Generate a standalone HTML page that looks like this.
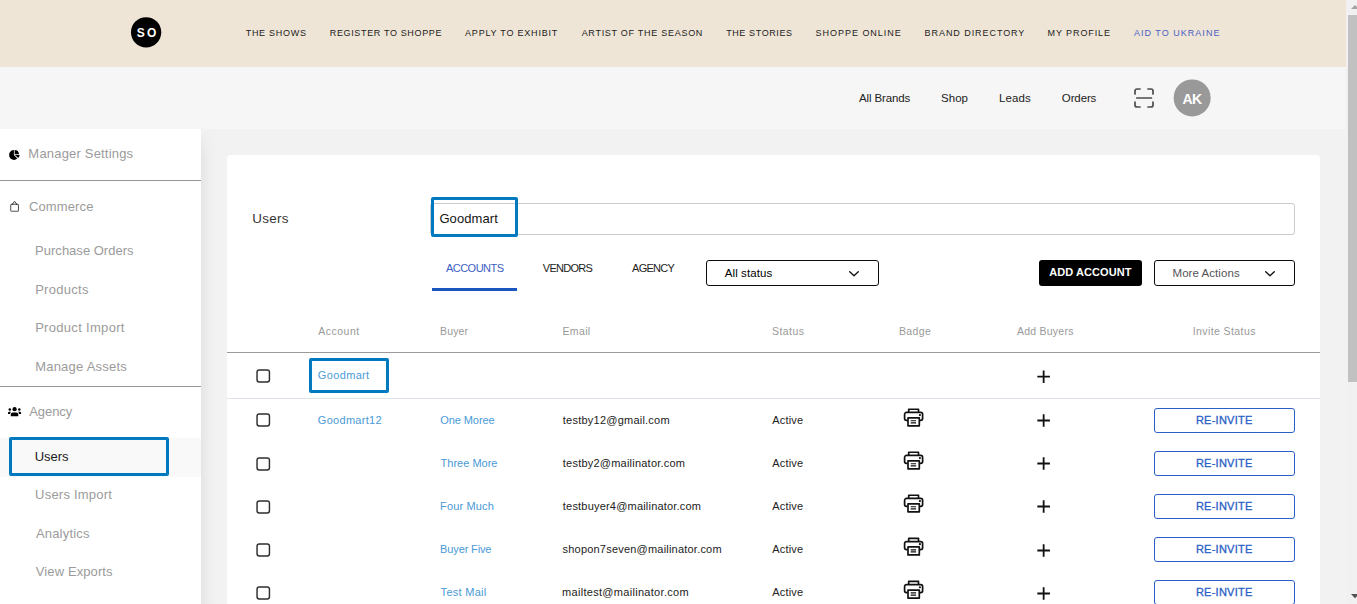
<!DOCTYPE html>
<html>
<head>
<meta charset="utf-8">
<title>Users</title>
<style>
*{box-sizing:border-box;margin:0;padding:0}
html,body{width:1357px;height:604px;overflow:hidden;background:#f1f1f1;font-family:"Liberation Sans",sans-serif;}
.abs{position:absolute}
#hdr{position:absolute;left:0;top:0;width:1346px;height:67px;background:#eee5d6}
#sub{position:absolute;left:0;top:67px;width:1346px;height:62px;background:#f6f6f6}
#main{position:absolute;left:0;top:129px;width:1346px;height:475px;background:#f2f2f2}
#shadow{position:absolute;left:201px;top:129px;width:26px;height:475px;background:linear-gradient(to right,#e5e5e5 0,#eaeaea 4px,#efefef 9px,#f2f2f2 17px)}
#side{position:absolute;left:0;top:129px;width:201px;height:475px;background:#fff}
#card{position:absolute;left:227px;top:155px;width:1093px;height:460px;background:#fff;border-radius:4px 4px 0 0}
#sbar{position:absolute;left:1346px;top:0;width:11px;height:604px;background:#f1f1f1}
#thumb{position:absolute;left:2px;top:15px;width:9px;height:367px;background:#c1c1c1}
.t{position:absolute;white-space:nowrap}
.cb{position:absolute;left:256px;width:14px;height:14px;border:1.6px solid #222;border-radius:3px;background:#fff}
.ri{position:absolute;left:1154px;width:141px;height:25px;border:1px solid #2a5fc6;border-radius:3px;background:#fff}
.hl{position:absolute;border:3px solid #0079bf;border-radius:2px}
svg{position:absolute;overflow:visible}
</style>
</head>
<body>
<div id="hdr"></div>
<div id="sub"></div>
<div id="main"></div>
<div id="shadow"></div>
<div class="abs" style="left:201px;top:129px;width:26px;height:30px;background:linear-gradient(to bottom,#f2f2f2 0,rgba(242,242,242,.6) 10px,rgba(242,242,242,0) 30px)"></div>
<div id="side"></div>
<div id="card"></div>
<div id="sbar"><div id="thumb"></div></div>
<svg style="left:1350.5px;top:4.8px" width="8" height="4" viewBox="0 0 8 4"><path d="M0 4L4 0L8 4Z" fill="#a3a3a3"/></svg>
<svg style="left:1350.5px;top:594px" width="8" height="4.2" viewBox="0 0 8 4.2"><path d="M0 0L4 4.2L8 0Z" fill="#505050"/></svg>

<!-- HEADER -->
<svg id="logo" style="left:130px;top:16px" width="33" height="33" viewBox="0 0 33 33"><circle cx="16.1" cy="16.3" r="15.15" fill="#000"/></svg>

<!-- SUBHEADER -->
<svg id="scan" style="left:1134px;top:88px" width="20" height="20" viewBox="0 0 20 20" fill="none" stroke="#4c4c4c" stroke-width="1.7" stroke-linecap="round" stroke-linejoin="round"><path d="M1 6V3a2 2 0 0 1 2-2h3M14 1h3a2 2 0 0 1 2 2v3M19 14v3a2 2 0 0 1-2 2h-3M6 19H3a2 2 0 0 1-2-2v-3M2.8 10h14.6"/></svg>
<svg id="ava" style="left:1172px;top:78px" width="40" height="40" viewBox="0 0 40 40"><circle cx="20.15" cy="19.9" r="18.5" fill="#999"/></svg>

<!-- SIDEBAR -->
<div class="abs" style="left:0;top:180px;width:201px;height:1px;background:#979797"></div>
<div class="abs" style="left:0;top:386px;width:201px;height:1px;background:#979797"></div>
<div class="abs" style="left:0;top:438px;width:201px;height:38.5px;background:#f9f9f9"></div>
<div class="hl" style="left:9px;top:437px;width:160px;height:39px"></div>
<svg id="ic-pie" style="left:9.2px;top:149.6px" width="10.8" height="10" viewBox="0 0 10.8 10"><path d="M4.9 0.1A4.9 4.9 0 1 0 8.3 8.5L4.9 5Z" fill="#000"/><path d="M5.6 0.1V4.3H10A4.5 4.5 0 0 0 5.6 0.1Z" fill="#000"/><path d="M5.9 5H10.7A4.6 4.6 0 0 1 9.3 7.9Z" fill="#000"/></svg>
<svg id="ic-bag" style="left:10px;top:200.4px" width="9.2" height="12" viewBox="0 0 9.2 12" fill="none" stroke="#555" stroke-width="1.05" stroke-linejoin="round"><rect x="0.7" y="4.3" width="7.8" height="7" rx="1.1"/><path d="M2.4 4.3L4.55 1.3L6.7 4.3" stroke="#333" stroke-width=".95"/><circle cx="2.3" cy="4.2" r=".6" fill="#222" stroke="none"/><circle cx="6.8" cy="4.2" r=".6" fill="#222" stroke="none"/></svg>
<svg id="ic-grp" style="left:8px;top:407px" width="13.1" height="10" viewBox="0 0 13.1 10" fill="#000"><circle cx="6.6" cy="2.15" r="2.1"/><path d="M2.8 9.2V7.5a2.1 2.1 0 0 1 2.1-2.1h3.3a2.1 2.1 0 0 1 2.1 2.1v1.7Z"/><circle cx="1.8" cy="2.5" r="1.25"/><circle cx="11.3" cy="2.5" r="1.25"/><path d="M0 7V5.9a1.2 1.2 0 0 1 1.2-1.2h1.7c-.5.6-.7 1.4-.7 2.3Z"/><path d="M13.1 7V5.9a1.2 1.2 0 0 0-1.2-1.2h-1.7c.5.6.7 1.4.7 2.3Z"/></svg>

<!-- CARD TOP -->
<div class="abs" style="left:430px;top:203px;width:865px;height:32px;border:1px solid #cbcbcb;border-radius:3px;background:#fff"></div>
<div class="hl" style="left:431px;top:197px;width:87px;height:40px"></div>
<div class="abs" style="left:432px;top:288px;width:85px;height:3px;background:#1b55c0"></div>
<div class="abs" style="left:706px;top:260px;width:173px;height:26px;border:1px solid #0c0c0c;border-radius:3px;background:#fff"></div>
<svg style="left:849px;top:270.7px" width="10" height="6" viewBox="0 0 10 6" fill="none" stroke="#111" stroke-width="1.35" stroke-linecap="round" stroke-linejoin="round"><path d="M.7.7L5 4.8L9.3.7"/></svg>
<div class="abs" style="left:1039px;top:260px;width:103px;height:26px;border-radius:3px;background:#000"></div>
<div class="abs" style="left:1154px;top:260px;width:141px;height:26px;border:1px solid #0c0c0c;border-radius:3px;background:#fff"></div>
<svg style="left:1264.7px;top:270.7px" width="10" height="6" viewBox="0 0 10 6" fill="none" stroke="#111" stroke-width="1.35" stroke-linecap="round" stroke-linejoin="round"><path d="M.7.7L5 4.8L9.3.7"/></svg>

<!-- TABLE LINES -->
<div class="abs" style="left:227px;top:352px;width:1093px;height:1px;background:#9a9a9a"></div>
<div class="abs" style="left:227px;top:398px;width:1093px;height:1px;background:#dfe4ea"></div>
<!-- ROWS -->
<div class="ri" style="top:408px"></div>
<div class="ri" style="top:451px"></div>
<div class="ri" style="top:494px"></div>
<div class="ri" style="top:537px"></div>
<div class="ri" style="top:580px"></div>
<div class="hl" style="left:309px;top:358px;width:80px;height:35px"></div>
<svg id="ov" style="left:0;top:0" width="1357" height="604" viewBox="0 0 1357 604">
<rect x="257.05" y="370.02" width="12.4" height="12.05" rx="2.2" fill="#fff" stroke="#2e2e2e" stroke-width="1.45"/>
<path transform="translate(1037.35,370.4)" d="M6.3 0v12.6M0 6.3h12.6" fill="none" stroke="#111" stroke-width="1.8"/>
<rect x="257.05" y="413.92" width="12.4" height="12.05" rx="2.2" fill="#fff" stroke="#2e2e2e" stroke-width="1.45"/>
<path transform="translate(1037.35,414.2)" d="M6.3 0v12.6M0 6.3h12.6" fill="none" stroke="#111" stroke-width="1.8"/>
<g transform="translate(903.1,408.05)" fill="none" stroke="#111" stroke-width="1.7" stroke-linejoin="round"><path d="M5.6 4.4V1.2h9.8v3.2"/><path d="M4.6 12.4H3.4A1.9 1.9 0 0 1 1.5 10.5V6.3A1.9 1.9 0 0 1 3.4 4.4h14.2a1.9 1.9 0 0 1 1.9 1.9v4.2a1.9 1.9 0 0 1-1.9 1.9h-1.2"/><path d="M4.9 9.8h11.3v8H4.9Z"/><path d="M7.6 12.7h5.4M7.6 14.8h5.4" stroke-width="1.2"/><circle cx="16.8" cy="7.0" r="1.1" fill="#111" stroke="none"/></g>
<rect x="257.05" y="457.92" width="12.4" height="12.05" rx="2.2" fill="#fff" stroke="#2e2e2e" stroke-width="1.45"/>
<path transform="translate(1037.35,457.2)" d="M6.3 0v12.6M0 6.3h12.6" fill="none" stroke="#111" stroke-width="1.8"/>
<g transform="translate(903.1,451.05)" fill="none" stroke="#111" stroke-width="1.7" stroke-linejoin="round"><path d="M5.6 4.4V1.2h9.8v3.2"/><path d="M4.6 12.4H3.4A1.9 1.9 0 0 1 1.5 10.5V6.3A1.9 1.9 0 0 1 3.4 4.4h14.2a1.9 1.9 0 0 1 1.9 1.9v4.2a1.9 1.9 0 0 1-1.9 1.9h-1.2"/><path d="M4.9 9.8h11.3v8H4.9Z"/><path d="M7.6 12.7h5.4M7.6 14.8h5.4" stroke-width="1.2"/><circle cx="16.8" cy="7.0" r="1.1" fill="#111" stroke="none"/></g>
<rect x="257.05" y="500.92" width="12.4" height="12.05" rx="2.2" fill="#fff" stroke="#2e2e2e" stroke-width="1.45"/>
<path transform="translate(1037.35,500.2)" d="M6.3 0v12.6M0 6.3h12.6" fill="none" stroke="#111" stroke-width="1.8"/>
<g transform="translate(903.1,494.05)" fill="none" stroke="#111" stroke-width="1.7" stroke-linejoin="round"><path d="M5.6 4.4V1.2h9.8v3.2"/><path d="M4.6 12.4H3.4A1.9 1.9 0 0 1 1.5 10.5V6.3A1.9 1.9 0 0 1 3.4 4.4h14.2a1.9 1.9 0 0 1 1.9 1.9v4.2a1.9 1.9 0 0 1-1.9 1.9h-1.2"/><path d="M4.9 9.8h11.3v8H4.9Z"/><path d="M7.6 12.7h5.4M7.6 14.8h5.4" stroke-width="1.2"/><circle cx="16.8" cy="7.0" r="1.1" fill="#111" stroke="none"/></g>
<rect x="257.05" y="544.02" width="12.4" height="12.05" rx="2.2" fill="#fff" stroke="#2e2e2e" stroke-width="1.45"/>
<path transform="translate(1037.35,544.2)" d="M6.3 0v12.6M0 6.3h12.6" fill="none" stroke="#111" stroke-width="1.8"/>
<g transform="translate(903.1,537.15)" fill="none" stroke="#111" stroke-width="1.7" stroke-linejoin="round"><path d="M5.6 4.4V1.2h9.8v3.2"/><path d="M4.6 12.4H3.4A1.9 1.9 0 0 1 1.5 10.5V6.3A1.9 1.9 0 0 1 3.4 4.4h14.2a1.9 1.9 0 0 1 1.9 1.9v4.2a1.9 1.9 0 0 1-1.9 1.9h-1.2"/><path d="M4.9 9.8h11.3v8H4.9Z"/><path d="M7.6 12.7h5.4M7.6 14.8h5.4" stroke-width="1.2"/><circle cx="16.8" cy="7.0" r="1.1" fill="#111" stroke="none"/></g>
<rect x="257.05" y="587.02" width="12.4" height="12.05" rx="2.2" fill="#fff" stroke="#2e2e2e" stroke-width="1.45"/>
<path transform="translate(1037.35,587.2)" d="M6.3 0v12.6M0 6.3h12.6" fill="none" stroke="#111" stroke-width="1.8"/>
<g transform="translate(903.1,580.25)" fill="none" stroke="#111" stroke-width="1.7" stroke-linejoin="round"><path d="M5.6 4.4V1.2h9.8v3.2"/><path d="M4.6 12.4H3.4A1.9 1.9 0 0 1 1.5 10.5V6.3A1.9 1.9 0 0 1 3.4 4.4h14.2a1.9 1.9 0 0 1 1.9 1.9v4.2a1.9 1.9 0 0 1-1.9 1.9h-1.2"/><path d="M4.9 9.8h11.3v8H4.9Z"/><path d="M7.6 12.7h5.4M7.6 14.8h5.4" stroke-width="1.2"/><circle cx="16.8" cy="7.0" r="1.1" fill="#111" stroke="none"/></g>
</svg>
<!-- TEXT -->
<div class="t" style="left:245.68px;top:26.88px;font-size:9px;line-height:12px;letter-spacing:0.717px;color:#222">THE SHOWS</div>
<div class="t" style="left:329.76px;top:26.88px;font-size:9px;line-height:12px;letter-spacing:0.649px;color:#222">REGISTER TO SHOPPE</div>
<div class="t" style="left:465.09px;top:26.88px;font-size:9px;line-height:12px;letter-spacing:0.788px;color:#222">APPLY TO EXHIBIT</div>
<div class="t" style="left:581.64px;top:26.88px;font-size:9px;line-height:12px;letter-spacing:0.722px;color:#222">ARTIST OF THE SEASON</div>
<div class="t" style="left:726.16px;top:26.88px;font-size:9px;line-height:12px;letter-spacing:0.608px;color:#222">THE STORIES</div>
<div class="t" style="left:815.58px;top:26.88px;font-size:9px;line-height:12px;letter-spacing:0.970px;color:#222">SHOPPE ONLINE</div>
<div class="t" style="left:924.57px;top:26.88px;font-size:9px;line-height:12px;letter-spacing:0.937px;color:#222">BRAND DIRECTORY</div>
<div class="t" style="left:1047.57px;top:26.88px;font-size:9px;line-height:12px;letter-spacing:0.896px;color:#222">MY PROFILE</div>
<div class="t" style="left:1133.94px;top:26.88px;font-size:9px;line-height:12px;letter-spacing:1.022px;color:#4a60c2">AID TO UKRAINE</div>
<div class="t" style="left:859.07px;top:90.52px;font-size:11.5px;line-height:15px;letter-spacing:-0.124px;color:#222">All Brands</div>
<div class="t" style="left:941.10px;top:90.52px;font-size:11.5px;line-height:15px;letter-spacing:-0.013px;color:#222">Shop</div>
<div class="t" style="left:998.99px;top:90.52px;font-size:11.5px;line-height:15px;letter-spacing:0.083px;color:#222">Leads</div>
<div class="t" style="left:1061.87px;top:90.52px;font-size:11.5px;line-height:15px;letter-spacing:-0.130px;color:#222">Orders</div>
<div class="t" style="left:28.37px;top:145.00px;font-size:13px;line-height:17px;letter-spacing:0.188px;color:#9b9b9b">Manager Settings</div>
<div class="t" style="left:28.89px;top:198.00px;font-size:13px;line-height:17px;letter-spacing:0.141px;color:#9b9b9b">Commerce</div>
<div class="t" style="left:35.11px;top:242.00px;font-size:13px;line-height:17px;letter-spacing:0.011px;color:#9b9b9b">Purchase Orders</div>
<div class="t" style="left:35.14px;top:281.00px;font-size:13px;line-height:17px;letter-spacing:0.301px;color:#9b9b9b">Products</div>
<div class="t" style="left:35.14px;top:319.00px;font-size:13px;line-height:17px;letter-spacing:0.312px;color:#9b9b9b">Product Import</div>
<div class="t" style="left:35.14px;top:358.00px;font-size:13px;line-height:17px;letter-spacing:0.233px;color:#9b9b9b">Manage Assets</div>
<div class="t" style="left:29.23px;top:403.00px;font-size:13px;line-height:17px;letter-spacing:-0.069px;color:#9b9b9b">Agency</div>
<div class="t" style="left:35.12px;top:486.00px;font-size:13px;line-height:17px;letter-spacing:0.212px;color:#9b9b9b">Users Import</div>
<div class="t" style="left:35.90px;top:525.00px;font-size:13px;line-height:17px;letter-spacing:0.200px;color:#9b9b9b">Analytics</div>
<div class="t" style="left:35.84px;top:563.00px;font-size:13px;line-height:17px;letter-spacing:0.099px;color:#9b9b9b">View Exports</div>
<div class="t" style="left:34.66px;top:448.00px;font-size:13px;line-height:17px;letter-spacing:-0.021px;color:#1c1c1c">Users</div>
<div class="t" style="left:252.35px;top:209.86px;font-size:13.4px;line-height:17px;letter-spacing:0.278px;color:#333">Users</div>
<div class="t" style="left:439.40px;top:210.00px;font-size:13px;line-height:17px;letter-spacing:0.093px;color:#151515">Goodmart</div>
<div class="t" style="left:445.91px;top:261.19px;font-size:11px;line-height:14px;letter-spacing:-0.504px;color:#3d5ec2">ACCOUNTS</div>
<div class="t" style="left:542.78px;top:261.19px;font-size:11px;line-height:14px;letter-spacing:-0.702px;color:#222">VENDORS</div>
<div class="t" style="left:632.07px;top:261.19px;font-size:11px;line-height:14px;letter-spacing:-0.746px;color:#222">AGENCY</div>
<div class="t" style="left:724.71px;top:265.52px;font-size:11.5px;line-height:15px;letter-spacing:0.111px;color:#000">All status</div>
<div class="t" style="left:1172.51px;top:265.52px;font-size:11.5px;line-height:15px;letter-spacing:0.060px;color:#555">More Actions</div>
<div class="t" style="left:1049.13px;top:265.19px;font-size:11px;line-height:14px;letter-spacing:0.084px;color:#fff;font-weight:bold">ADD ACCOUNT</div>
<div class="t" style="left:318.24px;top:324.36px;font-size:10.5px;line-height:14px;letter-spacing:0.493px;color:#999">Account</div>
<div class="t" style="left:440.10px;top:324.36px;font-size:10.5px;line-height:14px;letter-spacing:0.134px;color:#999">Buyer</div>
<div class="t" style="left:562.40px;top:324.36px;font-size:10.5px;line-height:14px;letter-spacing:0.389px;color:#999">Email</div>
<div class="t" style="left:772.12px;top:324.36px;font-size:10.5px;line-height:14px;letter-spacing:0.400px;color:#999">Status</div>
<div class="t" style="left:898.92px;top:324.36px;font-size:10.5px;line-height:14px;letter-spacing:0.402px;color:#999">Badge</div>
<div class="t" style="left:1016.91px;top:324.36px;font-size:10.5px;line-height:14px;letter-spacing:0.249px;color:#999">Add Buyers</div>
<div class="t" style="left:1192.63px;top:324.36px;font-size:10.5px;line-height:14px;letter-spacing:0.421px;color:#999">Invite Status</div>
<div class="t" style="left:317.87px;top:368.19px;font-size:11px;line-height:14px;letter-spacing:0.343px;color:#4a9ad6">Goodmart</div>
<div class="t" style="left:317.87px;top:413.19px;font-size:11px;line-height:14px;letter-spacing:0.281px;color:#4a9ad6">Goodmart12</div>
<div class="t" style="left:440.31px;top:413.19px;font-size:11px;line-height:14px;letter-spacing:-0.088px;color:#4a9ad6">One Moree</div>
<div class="t" style="left:562.83px;top:413.19px;font-size:11px;line-height:14px;letter-spacing:0.230px;color:#222">testby12@gmail.com</div>
<div class="t" style="left:772.24px;top:413.19px;font-size:11px;line-height:14px;letter-spacing:0.198px;color:#222">Active</div>
<div class="t" style="left:1195.93px;top:413.19px;font-size:11px;line-height:14px;letter-spacing:0.248px;color:#2a5fc6;-webkit-text-stroke:.3px #2a5fc6">RE-INVITE</div>
<div class="t" style="left:440.60px;top:456.19px;font-size:11px;line-height:14px;letter-spacing:0.001px;color:#4a9ad6">Three More</div>
<div class="t" style="left:562.83px;top:456.19px;font-size:11px;line-height:14px;letter-spacing:0.220px;color:#222">testby2@mailinator.com</div>
<div class="t" style="left:772.24px;top:456.19px;font-size:11px;line-height:14px;letter-spacing:0.198px;color:#222">Active</div>
<div class="t" style="left:1195.93px;top:456.19px;font-size:11px;line-height:14px;letter-spacing:0.248px;color:#2a5fc6;-webkit-text-stroke:.3px #2a5fc6">RE-INVITE</div>
<div class="t" style="left:440.09px;top:499.19px;font-size:11px;line-height:14px;letter-spacing:0.151px;color:#4a9ad6">Four Much</div>
<div class="t" style="left:562.83px;top:499.19px;font-size:11px;line-height:14px;letter-spacing:0.198px;color:#222">testbuyer4@mailinator.com</div>
<div class="t" style="left:772.24px;top:499.19px;font-size:11px;line-height:14px;letter-spacing:0.198px;color:#222">Active</div>
<div class="t" style="left:1195.93px;top:499.19px;font-size:11px;line-height:14px;letter-spacing:0.248px;color:#2a5fc6;-webkit-text-stroke:.3px #2a5fc6">RE-INVITE</div>
<div class="t" style="left:440.09px;top:542.19px;font-size:11px;line-height:14px;letter-spacing:-0.129px;color:#4a9ad6">Buyer Five</div>
<div class="t" style="left:562.53px;top:542.19px;font-size:11px;line-height:14px;letter-spacing:0.209px;color:#222">shopon7seven@mailinator.com</div>
<div class="t" style="left:772.24px;top:542.19px;font-size:11px;line-height:14px;letter-spacing:0.198px;color:#222">Active</div>
<div class="t" style="left:1195.93px;top:542.19px;font-size:11px;line-height:14px;letter-spacing:0.248px;color:#2a5fc6;-webkit-text-stroke:.3px #2a5fc6">RE-INVITE</div>
<div class="t" style="left:440.60px;top:585.19px;font-size:11px;line-height:14px;letter-spacing:0.286px;color:#4a9ad6">Test Mail</div>
<div class="t" style="left:562.10px;top:585.19px;font-size:11px;line-height:14px;letter-spacing:0.297px;color:#222">mailtest@mailinator.com</div>
<div class="t" style="left:772.24px;top:585.19px;font-size:11px;line-height:14px;letter-spacing:0.198px;color:#222">Active</div>
<div class="t" style="left:1195.93px;top:585.19px;font-size:11px;line-height:14px;letter-spacing:0.248px;color:#2a5fc6;-webkit-text-stroke:.3px #2a5fc6">RE-INVITE</div>
<div class="t" style="left:136.76px;top:24.84px;font-size:12px;line-height:16px;letter-spacing:2.274px;color:#fff;font-weight:bold">SO</div>
<div class="t" style="left:1182.48px;top:90.15px;font-size:14px;line-height:18px;letter-spacing:-0.569px;color:#fff;font-weight:bold">AK</div>
</body>
</html>
